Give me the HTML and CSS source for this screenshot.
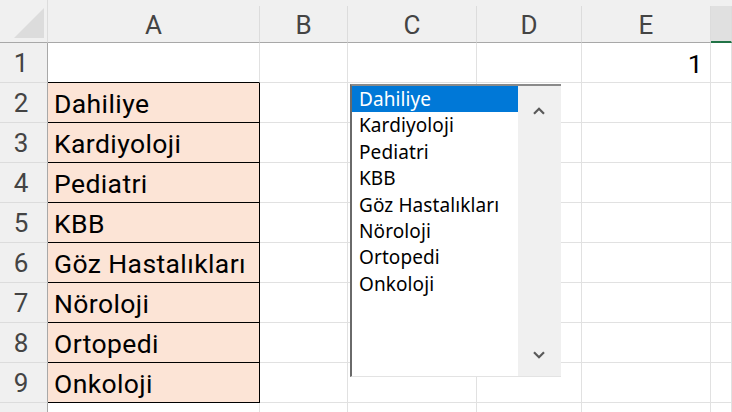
FILE: index.html
```html
<!DOCTYPE html>
<html lang="tr">
<head>
  <meta charset="UTF-8">
  <title>Bölümler</title>
  <link rel="stylesheet" href="styles.css">
</head>
<body>
  <div class="sheet">
    <!-- header row -->
    <div class="corner"><span class="tri"></span></div>
    <div class="colhead">A</div>
    <div class="colhead">B</div>
    <div class="colhead">C</div>
    <div class="colhead">D</div>
    <div class="colhead">E</div>
    <div class="colhead active"></div>

    <div class="rowhead">1</div>
    <div class="cell edge"></div><div class="cell"></div><div class="cell"></div><div class="cell"></div>
    <div class="cell num">1</div><div class="cell"></div>

    <div class="rowhead">2</div>
    <div class="cell dept">Dahiliye</div><div class="cell"></div><div class="cell"></div><div class="cell"></div><div class="cell"></div><div class="cell"></div>
    <div class="rowhead">3</div>
    <div class="cell dept">Kardiyoloji</div><div class="cell"></div><div class="cell"></div><div class="cell"></div><div class="cell"></div><div class="cell"></div>
    <div class="rowhead">4</div>
    <div class="cell dept">Pediatri</div><div class="cell"></div><div class="cell"></div><div class="cell"></div><div class="cell"></div><div class="cell"></div>
    <div class="rowhead">5</div>
    <div class="cell dept">KBB</div><div class="cell"></div><div class="cell"></div><div class="cell"></div><div class="cell"></div><div class="cell"></div>
    <div class="rowhead">6</div>
    <div class="cell dept">Göz Hastalıkları</div><div class="cell"></div><div class="cell"></div><div class="cell"></div><div class="cell"></div><div class="cell"></div>
    <div class="rowhead">7</div>
    <div class="cell dept">Nöroloji</div><div class="cell"></div><div class="cell"></div><div class="cell"></div><div class="cell"></div><div class="cell"></div>
    <div class="rowhead">8</div>
    <div class="cell dept">Ortopedi</div><div class="cell"></div><div class="cell"></div><div class="cell"></div><div class="cell"></div><div class="cell"></div>
    <div class="rowhead">9</div>
    <div class="cell dept">Onkoloji</div><div class="cell"></div><div class="cell"></div><div class="cell"></div><div class="cell"></div><div class="cell"></div>

    <!-- row 10 only peeks in at the bottom edge -->
    <div class="rowhead"></div>
    <div class="cell"></div><div class="cell"></div><div class="cell"></div><div class="cell"></div><div class="cell"></div><div class="cell"></div>

    <!-- form control list box floating over the sheet -->
    <div class="listbox">
      <div class="items">
        <div class="item selected">Dahiliye</div>
        <div class="item">Kardiyoloji</div>
        <div class="item">Pediatri</div>
        <div class="item">KBB</div>
        <div class="item">Göz Hastalıkları</div>
        <div class="item">Nöroloji</div>
        <div class="item">Ortopedi</div>
        <div class="item">Onkoloji</div>
      </div>
      <div class="scrollbar">
        <div class="arrow up">
          <svg width="12" height="8" viewBox="0 0 12 8"><path d="M1 6.8 L6 1.8 L11 6.8" fill="none" stroke="#5a5a5a" stroke-width="2.2"/></svg>
        </div>
        <div class="track"></div>
        <div class="arrow down">
          <svg width="12" height="8" viewBox="0 0 12 8"><path d="M1 1.2 L6 6.2 L11 1.2" fill="none" stroke="#5a5a5a" stroke-width="2.2"/></svg>
        </div>
      </div>
    </div>
  </div>
</body>
</html>
```

FILE: styles.css
```css
body {
  margin: 0;
  background: #fff;
  overflow: hidden;
  font-family: Roboto, "Liberation Sans", sans-serif;
}
.sheet {
  position: relative;
  display: grid;
  grid-template-columns: 48px 212px 88px 129px 105px 129px 21px;
  grid-template-rows: 43px repeat(10, 40px);
  background: #f0f0f0;
}
.corner {
  display: flex;
  justify-content: flex-end;
  align-items: flex-end;
  padding: 0 3px 4px 0;
  border-right: 1px solid #dcdcdc;
  border-bottom: 1px solid #a8a8a8;
}
.tri {
  width: 30px;
  height: 30px;
  background: #dcdcdc;
  clip-path: polygon(100% 0, 100% 100%, 0 100%);
}
.colhead {
  display: flex;
  align-items: center;
  justify-content: center;
  margin-top: 6px;
  padding-top: 2px;
  border-right: 1px solid #dcdcdc;
  border-bottom: 1px solid #a8a8a8;
  color: #444;
  font-size: 26px;
}
.colhead.active {
  background: #e0e0e0;
  border-bottom: 2px solid #217346;
}
.rowhead {
  display: flex;
  align-items: center;
  justify-content: center;
  padding-right: 5px;
  border-right: 1px solid #a8a8a8;
  border-bottom: 1px solid #dcdcdc;
  color: #444;
  font-size: 26px;
}
.cell {
  display: flex;
  align-items: flex-end;
  padding: 0 6px 3px;
  background: #fff;
  border-right: 1px solid #e1e1e1;
  border-bottom: 1px solid #e1e1e1;
  color: #000;
  font-size: 26.5px;
  letter-spacing: 0.4px;
  white-space: nowrap;
}
.cell.edge {
  border-bottom-color: #000;
}
.cell.dept {
  background: #fce4d6;
  border-right-color: #000;
  border-bottom-color: #000;
}
.cell.num {
  justify-content: flex-end;
  padding-right: 7px;
}

.listbox {
  position: absolute;
  left: 350px;
  top: 84px;
  width: 211px;
  height: 293px;
  display: flex;
  box-sizing: border-box;
  background: #fff;
  border-top: 2px solid #8a8a8a;
  border-left: 2px solid #6a6a6a;
  border-bottom: 1px solid #e3e3e3;
  font-family: "Noto Sans", sans-serif;
  font-size: 19px;
  letter-spacing: 0.1px;
}
.items {
  flex: 1;
}
.item {
  height: 26.4px;
  line-height: 26.4px;
  padding-left: 7px;
  color: #000;
  white-space: nowrap;
}
.item.selected {
  background: #0078d7;
  color: #fff;
}
.scrollbar {
  width: 43px;
  display: flex;
  flex-direction: column;
  background: #f0f0f0;
}
.arrow {
  display: flex;
  justify-content: center;
  padding-right: 2px;
}
.arrow.up {
  align-items: flex-end;
  height: 29px;
}
.arrow.down {
  align-items: flex-start;
  height: 40px;
  padding-top: 15px;
  box-sizing: border-box;
}
.track {
  flex: 1;
}
```
